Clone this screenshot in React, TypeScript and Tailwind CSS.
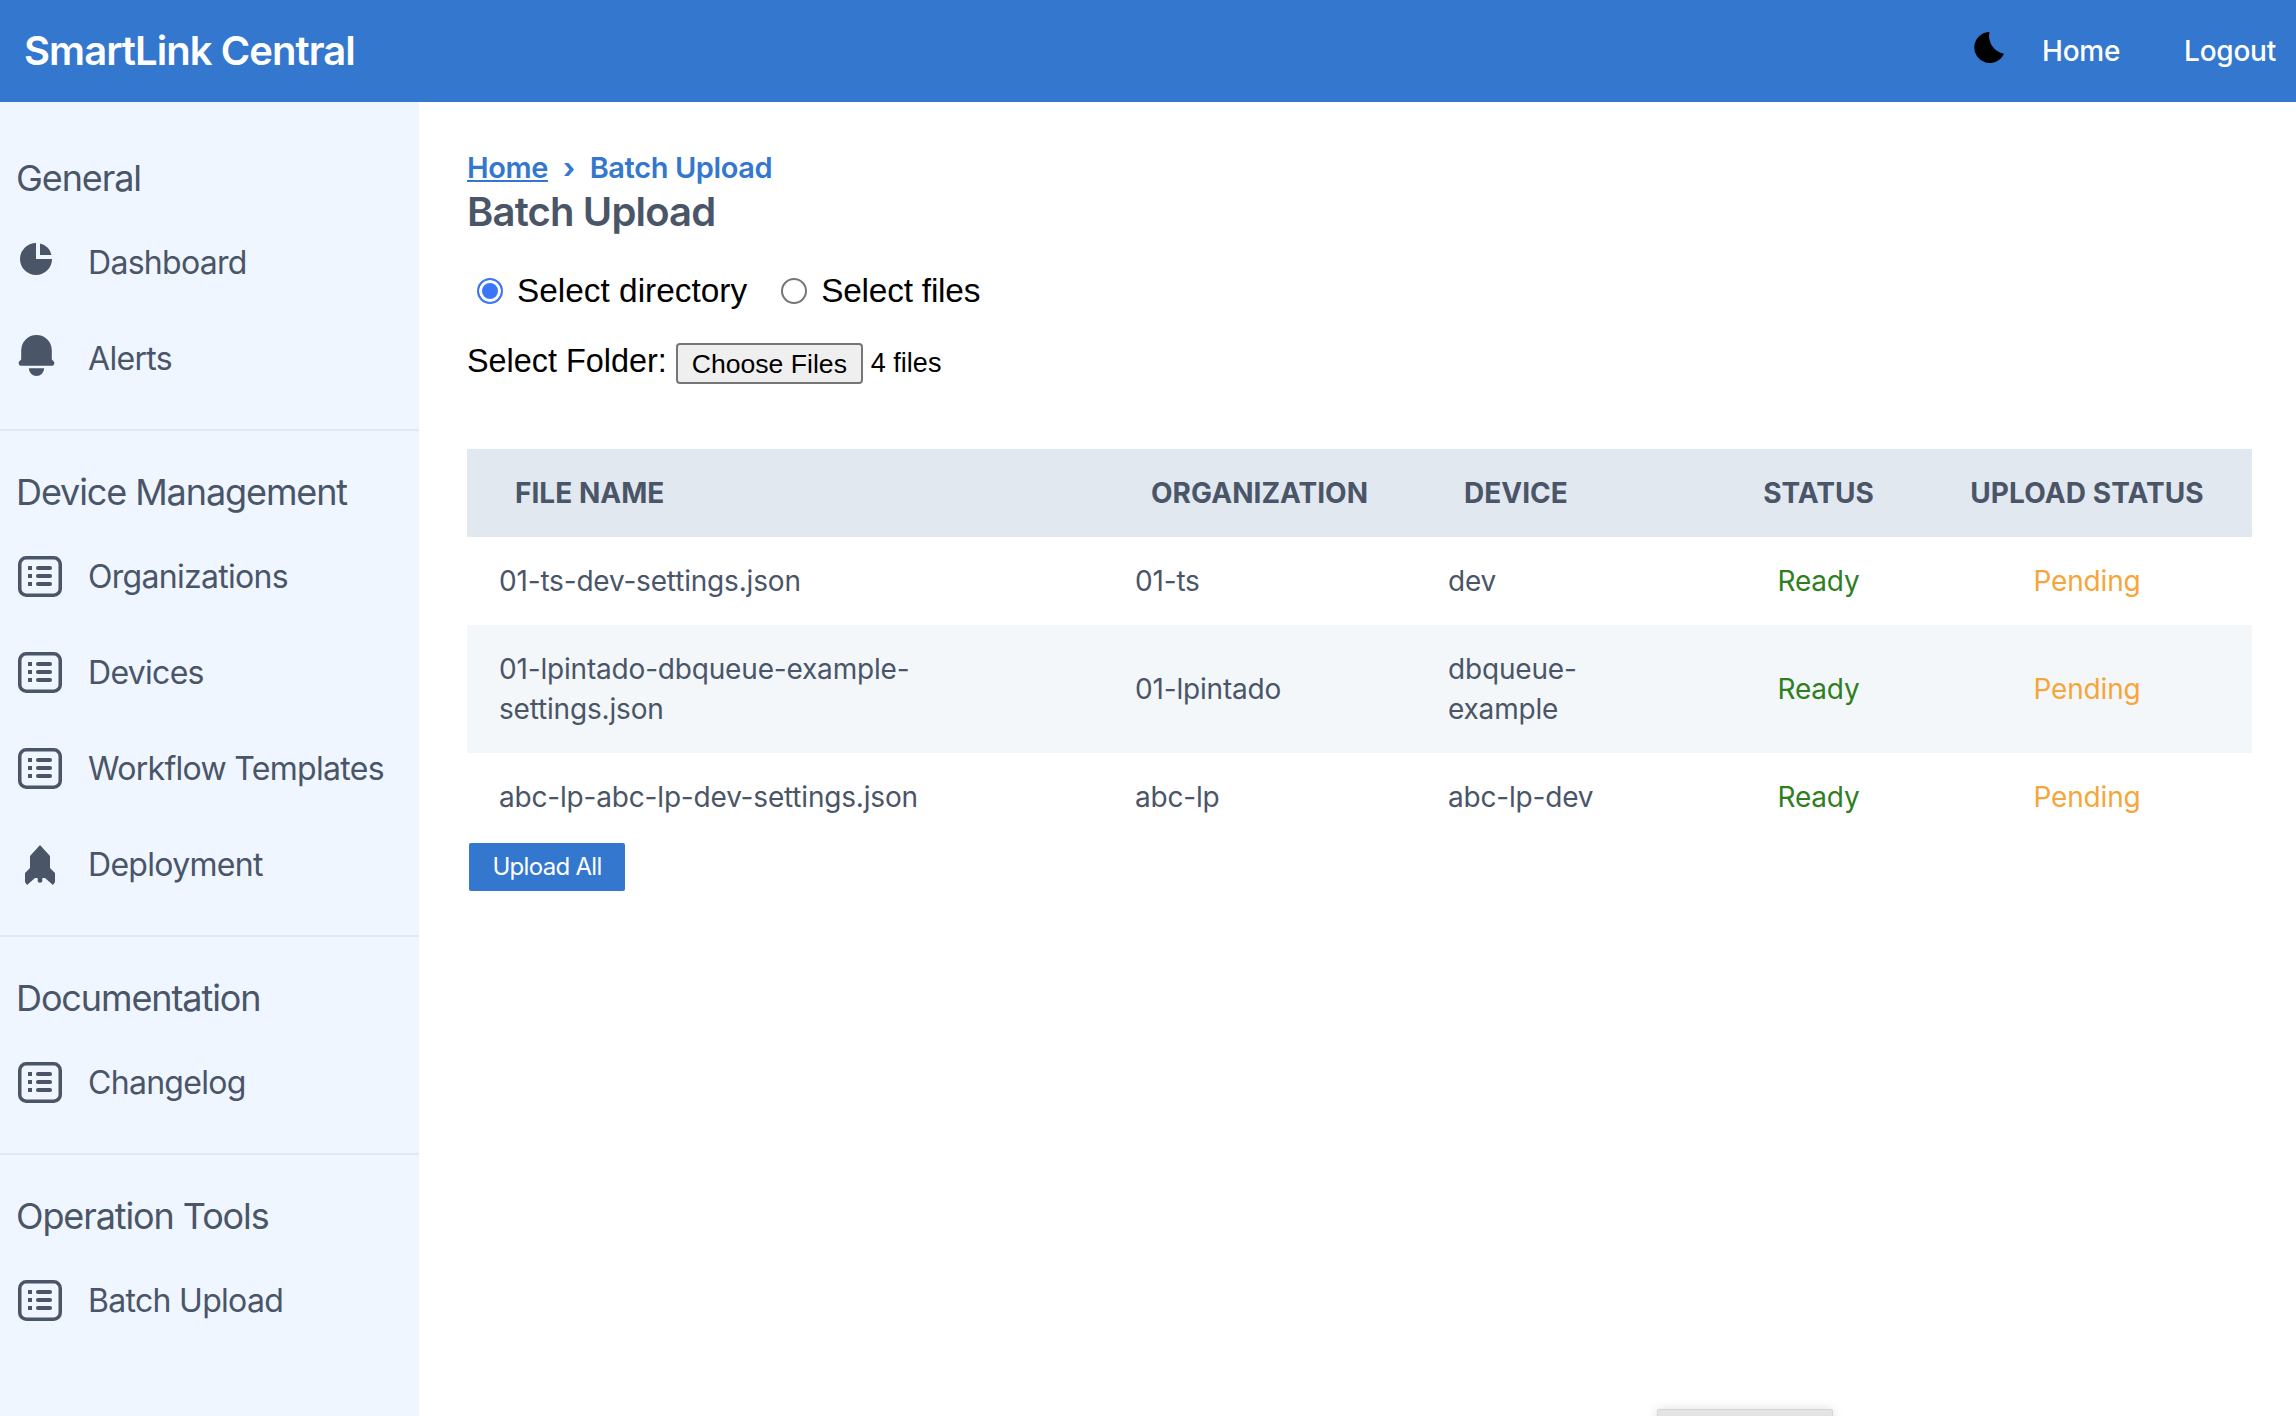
import React from "react";

const inter = "font-['Inter','Liberation_Sans',sans-serif]";

function Pie() {
  return (
    <svg viewBox="0 0 20 20" fill="currentColor" className="h-[40px] w-[40px] shrink-0 -translate-y-[4px]">
      <path d="M2 10a8 8 0 018-8v8h8a8 8 0 11-16 0z" />
      <path d="M12 2.252A8.014 8.014 0 0117.748 8H12V2.252z" />
    </svg>
  );
}

function Bell() {
  return (
    <svg viewBox="0 0 20 20" fill="currentColor" className="-ml-[5px] h-[51px] w-[51px] shrink-0 -translate-y-[4px]">
      <path d="M10 2a6 6 0 00-6 6v3.586l-.707.707A1 1 0 004 14h12a1 1 0 00.707-1.707L16 11.586V8a6 6 0 00-6-6zM10 18a3 3 0 01-3-3h6a3 3 0 01-3 3z" />
    </svg>
  );
}

function List() {
  return (
    <svg viewBox="0 0 44 41" className="ml-[2px] h-[41px] w-[44px] shrink-0 -translate-y-[1px]" fill="none">
      <rect x="1.75" y="1.75" width="40.5" height="37.5" rx="6.5" stroke="currentColor" strokeWidth="3.5" />
      <rect x="10" y="10" width="4" height="4" fill="currentColor" />
      <rect x="10" y="18" width="4" height="4" fill="currentColor" />
      <rect x="10" y="26" width="4" height="4" fill="currentColor" />
      <rect x="18" y="10" width="16" height="4" rx="2" fill="currentColor" />
      <rect x="18" y="18" width="16" height="4" rx="2" fill="currentColor" />
      <rect x="18" y="26" width="16" height="4" rx="2" fill="currentColor" />
    </svg>
  );
}

function Rocket() {
  return (
    <svg viewBox="0 0 30 40" fill="currentColor" className="ml-[9px] h-[40px] w-[30px] shrink-0">
      <path d="M15 0L25 11V23L30 28V37L28 40L20 33H17.3V36.5Q15 39 12.7 36.5V33H10L2 40L0 37V28L5 23V11Z" />
    </svg>
  );
}

function Moon() {
  return (
    <svg viewBox="0 0 30 30" fill="black" className="h-[31px] w-[31px] -translate-y-[4px]">
      <path d="M15 0A15 15 0 1 0 29 21A17.5 17.5 0 0 1 15 0Z" />
    </svg>
  );
}

function Item({ icon, label }: { icon: React.ReactNode; label: string }) {
  return (
    <li className="flex h-[96px] items-center pl-[16px]">
      <span className="flex w-[72px] items-center text-[#4a5568]">{icon}</span>
      <span className="text-[32px] leading-[48px] tracking-[-0.7px] text-[#4a5568]">{label}</span>
    </li>
  );
}

function Section({ title, children, last, first }: { title: string; children: React.ReactNode; last?: boolean; first?: boolean }) {
  return (
    <div className={`${first ? "pt-[52px]" : "pt-[37px]"} ${last ? "" : "border-b-2 border-[#e2e8f0] pb-[22px]"}`}>
      <h3 className="pl-[16px] text-[36px] leading-[48px] tracking-[-1.1px] text-[#4a5568]">{title}</h3>
      <ul className="mt-[13px]">{children}</ul>
    </div>
  );
}

const rows = [
  { f: "01-ts-dev-settings.json", o: "01-ts", d: "dev", bg: "" },
  { f: "01-lpintado-dbqueue-example-settings.json", o: "01-lpintado", d: "dbqueue-example", bg: "bg-[#f4f7fa]" },
  { f: "abc-lp-abc-lp-dev-settings.json", o: "abc-lp", d: "abc-lp-dev", bg: "" },
];

const radio =
  "m-0 h-[26px] w-[26px] appearance-none rounded-full border-2 border-[#767676] bg-white checked:border-[#3b76f6] checked:bg-[#3b76f6] checked:shadow-[inset_0_0_0_3px_white]";

export default function App() {
  return (
    <div className={`relative flex h-[1416px] flex-col overflow-hidden bg-white ${inter}`}>
      <header className="flex h-[102px] shrink-0 items-center justify-between bg-[#3477ce] pl-[24px] pr-[20px]">
        <span className="text-[40px] font-semibold leading-[60px] tracking-[-0.95px] text-white">SmartLink Central</span>
        <nav className="flex items-center gap-[64px] text-[28px] font-medium tracking-[-0.25px] text-white">
          <div className="flex items-center gap-[37px]">
            <Moon />
            <span>Home</span>
          </div>
          <span>Logout</span>
        </nav>
      </header>
      <div className="flex min-h-0 flex-1">
        <aside className="w-[419px] shrink-0 bg-[#eff6ff]">
          <Section title="General" first>
            <Item icon={<Pie />} label="Dashboard" />
            <Item icon={<Bell />} label="Alerts" />
          </Section>
          <Section title="Device Management">
            <Item icon={<List />} label="Organizations" />
            <Item icon={<List />} label="Devices" />
            <Item icon={<List />} label="Workflow Templates" />
            <Item icon={<Rocket />} label="Deployment" />
          </Section>
          <Section title="Documentation">
            <Item icon={<List />} label="Changelog" />
          </Section>
          <Section title="Operation Tools" last>
            <Item icon={<List />} label="Batch Upload" />
          </Section>
        </aside>
        <main className="min-w-0 flex-1 pl-[48px] pr-[44px] pt-[46px]">
          <div className="flex items-center text-[29px] font-semibold leading-[40px] tracking-[-0.4px] text-[#3477ce]">
            <span className="underline">Home</span>
            <span className="mx-[15px] text-[28px] font-bold">›</span>
            <span>Batch Upload</span>
          </div>
          <h1 className="text-[40px] font-semibold leading-[48px] tracking-[-0.85px] text-[#4a5568]">Batch Upload</h1>
          <div className="mt-[31px] flex h-[48px] items-center pl-[10px] font-['Liberation_Sans',sans-serif] text-[33.4px] text-black">
            <label className="flex items-center">
              <input type="radio" name="m" defaultChecked className={radio} />
              <span className="ml-[14px]">Select directory</span>
            </label>
            <label className="ml-[34px] flex items-center">
              <input type="radio" name="m" className={radio} />
              <span className="ml-[14px] tracking-[-0.2px]">Select files</span>
            </label>
          </div>
          <div className="mt-[22px] flex items-center font-['Liberation_Sans',sans-serif] text-black">
            <span className="text-[32.4px] leading-[48px]">Select Folder:</span>
            <button className="ml-[9px] mt-[4px] h-[41px] w-[187px] rounded-[4px] border-2 border-[#767676] bg-[#efefef] text-[26.6px]">Choose Files</button>
            <span className="ml-[8px] mt-[4px] text-[27px]">4 files</span>
          </div>
          <table className="mt-[64px] w-[1785px] table-fixed border-collapse text-[28px] leading-[40px] tracking-[-0.18px] text-[#4a5568]">
            <colgroup>
              <col className="w-[636px]" />
              <col className="w-[314px]" />
              <col className="w-[298px]" />
              <col className="w-[207px]" />
              <col className="w-[330px]" />
            </colgroup>
            <thead>
              <tr className="h-[88px] bg-[#e2e8f0]">
                <th className="pl-[48px] text-left font-bold tracking-[0.03px]">FILE NAME</th>
                <th className="pl-[48px] text-left font-bold tracking-[0.03px]">ORGANIZATION</th>
                <th className="pl-[47px] text-left font-bold tracking-[0.03px]">DEVICE</th>
                <th className="text-center font-bold tracking-[0.03px]">STATUS</th>
                <th className="text-center font-bold tracking-[0.1px]">UPLOAD STATUS</th>
              </tr>
            </thead>
            <tbody>
              {rows.map((r) => (
                <tr key={r.f} className={r.bg}>
                  <td className="py-[24px] pl-[32px] pr-[130px]">{r.f}</td>
                  <td className="py-[24px] pl-[32px]">{r.o}</td>
                  <td className="py-[24px] pl-[31px] pr-[100px]">{r.d}</td>
                  <td className="py-[24px] text-center text-[#2f7f1f]">Ready</td>
                  <td className="py-[24px] text-center text-[#f5a63a]">Pending</td>
                </tr>
              ))}
            </tbody>
          </table>
          <button className="ml-[2px] mt-[2px] h-[48px] w-[156px] rounded-[2px] bg-[#3477ce] text-[24px] tracking-[-0.7px] text-white">Upload All</button>
        </main>
      </div>
      <div className="absolute left-[1657px] top-[1409px] h-[20px] w-[176px] rounded-[2px] border border-[#d4d4d4] bg-[#e4e4e4] shadow-[0_0_12px_rgba(0,0,0,0.12)]" />
    </div>
  );
}
